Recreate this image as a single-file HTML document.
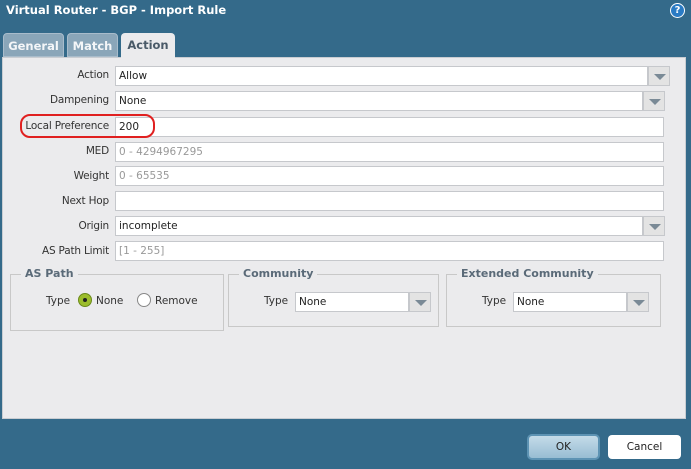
<html><head><style>
body{margin:0;width:691px;height:469px;background:#346a8a;font-family:"DejaVu Sans",sans-serif;font-size:10.5px;position:relative;overflow:hidden}
.a{position:absolute}
.t{color:#fff;font-weight:bold;font-size:11.5px;left:6px;top:3px}
.tab{top:33px;height:24px;border-radius:4px 4px 0 0;font-weight:bold;font-size:11.5px;text-align:center;line-height:24px;box-sizing:border-box}
.panel{left:2px;top:57px;width:684px;height:362px;background:#ebebed;border:1px solid #c9cdd2;box-sizing:border-box}
.lbl{width:106px;left:3px;text-align:right;color:#333;letter-spacing:-0.2px}
.in{background:#fff;border:1px solid #c6c8cc;box-sizing:border-box;height:20px;line-height:18px;padding-left:3px;color:#222}
.ph{color:#999}
.btn{background:#e3e3e3;border:1px solid #c6c8cc;box-sizing:border-box;height:20px;width:22px}
.btn:after{content:"";position:absolute;left:5px;top:7px;border-left:6px solid transparent;border-right:6px solid transparent;border-top:6px solid #7a8a96}
.fs{border:1px solid #c8c8c8;box-sizing:border-box}
.lg{font-weight:bold;color:#5a6a78;background:#ebebed;padding:0 4px;top:-8px;font-size:11px}
</style></head><body>
<div class="a t">Virtual Router - BGP - Import Rule</div>
<div class="a" style="left:670px;top:3px;width:13px;height:13px;border-radius:50%;background:#2a7bc4;border:1px solid #fff;color:#fff;font-size:10px;font-weight:bold;text-align:center;line-height:13px">?</div>
<div class="a tab" style="left:3px;width:61px;background:#8aa6b9;color:#f4f6f8;border:1px solid #a8bccb">General</div>
<div class="a tab" style="left:67px;width:51px;background:#8aa6b9;color:#f4f6f8;border:1px solid #a8bccb">Match</div>
<div class="a tab" style="left:121px;width:54px;background:#ebebed;color:#4a5a68;height:25px;z-index:2">Action</div>
<div class="a panel"></div>

<div class="a lbl" style="top:69px">Action</div>
<div class="a in" style="left:115px;top:66px;width:533px">Allow</div><div class="a btn" style="left:648px;top:66px"></div>
<div class="a lbl" style="top:94px">Dampening</div>
<div class="a in" style="left:115px;top:91px;width:528px">None</div><div class="a btn" style="left:643px;top:91px"></div>
<div class="a lbl" style="top:120px">Local Preference</div>
<div class="a in" style="left:115px;top:117px;width:549px">200</div>
<div class="a" style="left:20px;top:114px;width:135px;height:24px;border:2px solid #e02020;border-radius:10px;box-sizing:border-box"></div>
<div class="a lbl" style="top:145px">MED</div>
<div class="a in ph" style="left:115px;top:142px;width:549px">0 - 4294967295</div>
<div class="a lbl" style="top:170px">Weight</div>
<div class="a in ph" style="left:115px;top:166px;width:549px">0 - 65535</div>
<div class="a lbl" style="top:195px">Next Hop</div>
<div class="a in" style="left:115px;top:191px;width:549px"></div>
<div class="a lbl" style="top:220px">Origin</div>
<div class="a in" style="left:115px;top:216px;width:528px">incomplete</div><div class="a btn" style="left:643px;top:216px"></div>
<div class="a lbl" style="top:245px">AS Path Limit</div>
<div class="a in ph" style="left:115px;top:241px;width:549px">[1 - 255]</div>

<div class="a fs" style="left:10px;top:274px;width:214px;height:57px"><div class="a lg" style="left:10px">AS Path</div>
<div class="a" style="left:35px;top:20px;color:#333">Type</div>
<div class="a" style="left:67px;top:18px;width:12px;height:12px;border-radius:50%;background:#9cbd2c;border:1px solid #6b8a1a"><div class="a" style="left:4px;top:4px;width:4px;height:4px;border-radius:50%;background:#222"></div></div>
<div class="a" style="left:85px;top:20px;color:#333">None</div>
<div class="a" style="left:126px;top:18px;width:12px;height:12px;border-radius:50%;background:#fff;border:1px solid #888"></div>
<div class="a" style="left:144px;top:20px;color:#333">Remove</div></div>

<div class="a fs" style="left:228px;top:274px;width:211px;height:53px"><div class="a lg" style="left:10px">Community</div>
<div class="a" style="left:35px;top:20px;color:#333">Type</div>
<div class="a in" style="left:66px;top:17px;width:114px">None</div><div class="a btn" style="left:180px;top:17px"></div></div>

<div class="a fs" style="left:446px;top:274px;width:215px;height:53px"><div class="a lg" style="left:10px">Extended Community</div>
<div class="a" style="left:35px;top:20px;color:#333">Type</div>
<div class="a in" style="left:66px;top:17px;width:114px">None</div><div class="a btn" style="left:180px;top:17px"></div></div>

<div class="a" style="left:527px;top:434px;width:73px;height:26px;border-radius:5px;background:linear-gradient(#c4dbe8,#98bdd3);border:2px solid #5d93b3;box-sizing:border-box;text-align:center;line-height:22px;color:#222">OK</div>
<div class="a" style="left:608px;top:435px;width:73px;height:24px;border-radius:4px;background:#fff;text-align:center;line-height:24px;color:#222">Cancel</div>
</body></html>
